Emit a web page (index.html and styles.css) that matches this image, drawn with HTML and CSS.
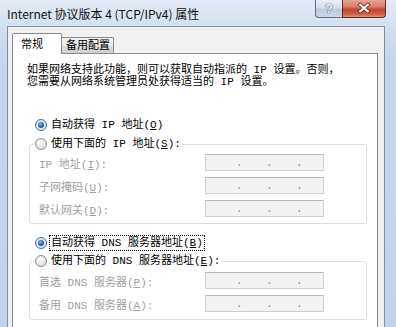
FILE: index.html
```html
<!DOCTYPE html>
<html lang="zh-CN">
<head>
<meta charset="utf-8">
<title>Internet 协议版本 4 (TCP/IPv4) 属性</title>
<link rel="stylesheet" href="styles.css">
</head>
<body>
<div class="window">
  <div class="titlebar">
    <span class="title">Internet 协议版本 4 (TCP/IPv4) 属性</span>
    <div class="caption">
      <span class="cap-btn help">?</span>
      <span class="cap-btn close"><svg width="44" height="17" viewBox="0 0 44 17"><path d="M18 4.5 L26 11.5 M26 4.5 L18 11.5" stroke="#5a1c14" stroke-width="3.6" stroke-linecap="square"/><path d="M18 4.5 L26 11.5 M26 4.5 L18 11.5" stroke="#ffffff" stroke-width="2.2" stroke-linecap="square"/></svg></span>
    </div>
  </div>
  <div class="client">
    <div class="tabs">
      <div class="tab active">常规</div>
      <div class="tab">备用配置</div>
    </div>
    <div class="panel">
      <p class="intro">如果网络支持此功能，则可以获取自动指派的 IP 设置。否则，<br>您需要从网络系统管理员处获得适当的 IP 设置。</p>

      <div class="radio checked top-radio"><span class="dot"></span><span class="lbl">自动获得 IP 地址(<u>O</u>)</span></div>

      <fieldset class="group">
        <legend><span class="radio"><span class="dot"></span><span class="lbl">使用下面的 IP 地址(<u>S</u>):</span></span></legend>
        <div class="row"><span class="flabel">IP 地址(<u>I</u>):</span><span class="ip"><i>.</i><i>.</i><i>.</i></span></div>
        <div class="row"><span class="flabel">子网掩码(<u>U</u>):</span><span class="ip"><i>.</i><i>.</i><i>.</i></span></div>
        <div class="row"><span class="flabel">默认网关(<u>D</u>):</span><span class="ip"><i>.</i><i>.</i><i>.</i></span></div>
      </fieldset>

      <div class="radio checked mid-radio"><span class="dot"></span><span class="lbl focus">自动获得 DNS 服务器地址(<u>B</u>)</span></div>

      <fieldset class="group group2">
        <legend><span class="radio"><span class="dot"></span><span class="lbl">使用下面的 DNS 服务器地址(<u>E</u>):</span></span></legend>
        <div class="row"><span class="flabel">首选 DNS 服务器(<u>P</u>):</span><span class="ip"><i>.</i><i>.</i><i>.</i></span></div>
        <div class="row"><span class="flabel">备用 DNS 服务器(<u>A</u>):</span><span class="ip"><i>.</i><i>.</i><i>.</i></span></div>
      </fieldset>
    </div>
  </div>
</div>
</body>
</html>
```

FILE: styles.css
```css
html, body {
  margin: 0;
  padding: 0;
}
body {
  width: 396px;
  height: 327px;
  overflow: hidden;
  font-family: "Liberation Mono", "Noto Sans CJK SC", monospace;
  font-size: 11px;
  color: #000;
}
.window {
  height: 327px;
  box-sizing: border-box;
  padding: 0 11px 0 7px;
  display: flex;
  flex-direction: column;
  background: linear-gradient(to bottom, #e3ebf5 0, #d2e0ef 26px, #c4d7ed 60px, #bed3eb 100%);
}
.titlebar {
  height: 26px;
  flex-shrink: 0;
  display: flex;
  align-items: flex-start;
}
.title {
  font-family: "Noto Sans CJK SC", "Liberation Sans", sans-serif;
  font-size: 12px;
  line-height: 16px;
  margin-top: 6px;
  color: #111;
  white-space: nowrap;
}
.caption {
  margin-left: auto;
  margin-right: -1px;
  display: flex;
  height: 18px;
}
.cap-btn {
  box-sizing: border-box;
  height: 18px;
  border: 1px solid #5e6f85;
  border-top: none;
  display: flex;
  align-items: center;
  justify-content: center;
}
.help {
  width: 27px;
  border-right: none;
  border-radius: 0 0 0 4px;
  background: linear-gradient(to bottom, #e9eff6 0%, #d3dde9 45%, #bccbdc 55%, #cbd8e6 100%);
  color: #eef3f8;
  font-family: "Liberation Sans", sans-serif;
  font-weight: bold;
  font-size: 13px;
  text-shadow: 0 0 1px #3d4d63, 0 0 1px #3d4d63;
}
.close {
  width: 44px;
  border-color: #6b2a22;
  border-radius: 0 0 4px 0;
  background: linear-gradient(to bottom, #e8a595 0%, #d77c68 40%, #c3442c 55%, #d2634c 85%, #e2937b 100%);
}
.close svg {
  display: block;
}
.client {
  flex: 1;
  background: #f0f0f0;
  border: 1px solid #7c8fa6;
  border-bottom: none;
  padding: 6px 6px 0 4px;
  display: flex;
  flex-direction: column;
  min-height: 0;
}
.tabs {
  display: flex;
  align-items: flex-end;
  height: 20px;
  flex-shrink: 0;
}
.tab {
  box-sizing: border-box;
  border: 1px solid #898c95;
  border-bottom: none;
  line-height: 14px;
  white-space: nowrap;
}
.tab.active {
  position: relative;
  z-index: 1;
  width: 50px;
  height: 21px;
  margin-bottom: -1px;
  background: #fff;
  padding: 4px 0 0 8px;
  border-radius: 2px 2px 0 0;
}
.tab:not(.active) {
  width: 52px;
  height: 16px;
  padding: 1px 0 0 4px;
  border-left: none;
  background: linear-gradient(to bottom, #f2f2f2 0%, #ebebeb 50%, #dddddd 51%, #cfcfcf 100%);
  border-radius: 0 2px 0 0;
}
.panel {
  flex: 1;
  background: #fff;
  border: 1px solid #898c95;
  border-bottom: none;
  padding-top: 10px;
  min-height: 0;
}
.intro {
  margin: 0 0 0 14px;
  line-height: 12px;
  white-space: nowrap;
}
.radio {
  display: flex;
  align-items: center;
  height: 16px;
  white-space: nowrap;
}
.top-radio {
  margin: 29px 0 0 22px;
}
.mid-radio {
  margin: 11px 0 0 22px;
}
.dot {
  box-sizing: border-box;
  width: 12px;
  height: 12px;
  border-radius: 50%;
  border: 1px solid #8e8f8f;
  background: radial-gradient(circle at 40% 35%, #ffffff 0%, #f0f0f0 35%, #cfcfcf 100%);
  margin-right: 4px;
  display: flex;
  align-items: center;
  justify-content: center;
  flex-shrink: 0;
}
.checked .dot {
  border-color: #4f6f94;
  background: radial-gradient(circle at 50% 50%, #e8f1fa 0%, #cddceb 100%);
}
.checked .dot::after {
  content: "";
  width: 6px;
  height: 6px;
  border-radius: 50%;
  background: radial-gradient(circle at 40% 35%, #8fc3f0 0%, #2f6fb2 45%, #17396a 100%);
}
.lbl {
  line-height: 14px;
}
.focus {
  outline: 1px dotted #000;
  outline-offset: 0;
  padding: 0 1px;
  margin-left: -1px;
}
.group {
  margin: 3px 10px 0 16px;
  border: 1px solid #d5dfe5;
  border-radius: 3px;
  padding: 2px 0 6px 9px;
  min-width: 0;
}
.group2 {
  margin-top: 2px;
  padding-top: 3px;
  padding-bottom: 7px;
}
.group legend {
  padding: 0 1px;
  margin-left: -5px;
  line-height: 16px;
}
.row {
  display: flex;
  align-items: center;
  height: 17px;
}
.row + .row {
  margin-top: 6px;
}
.flabel {
  width: 166px;
  color: #a0a0a0;
  white-space: nowrap;
}
.ip {
  box-sizing: border-box;
  width: 119px;
  height: 17px;
  border: 1px solid #cfcfcf;
  border-top-color: #b9b9b9;
  background: #f3f3f3;
  display: flex;
  align-items: center;
  padding-left: 30px;
  gap: 24px;
}
.ip i {
  font-style: normal;
  width: 6px;
  text-align: center;
  color: #8c8c8c;
  line-height: 10px;
}
```
